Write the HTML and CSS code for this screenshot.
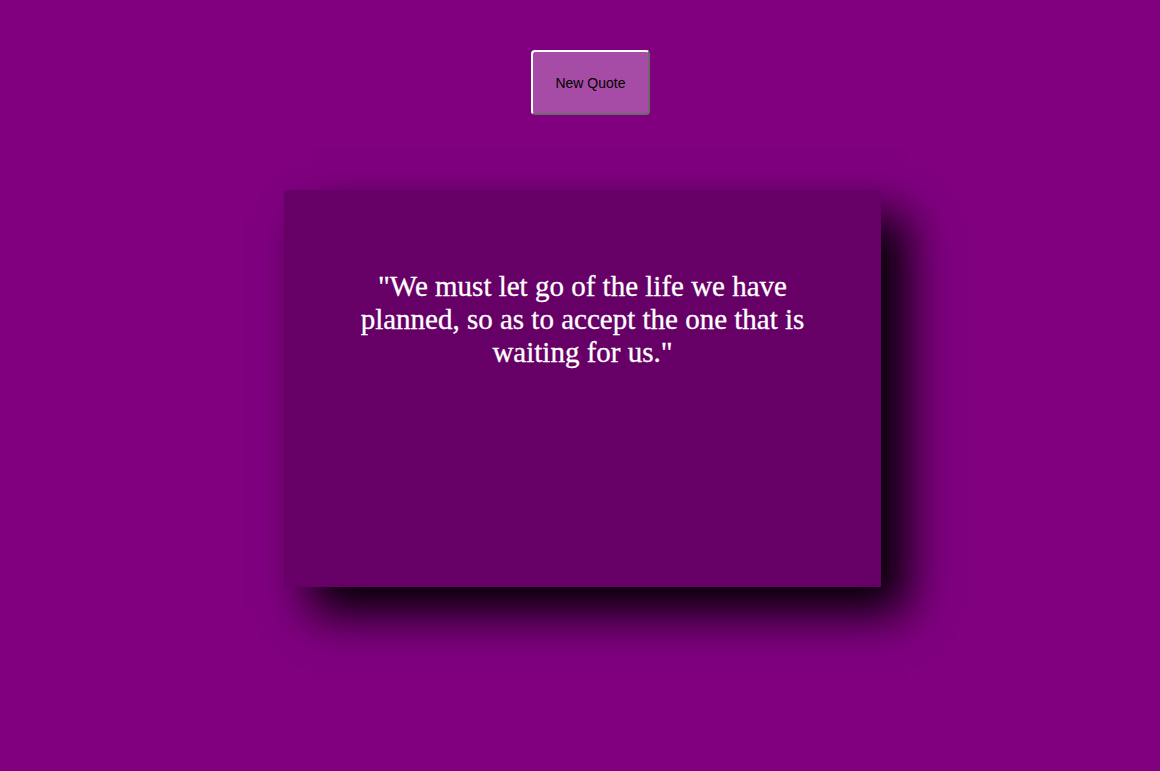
FILE: index.html
```html
<!DOCTYPE html>
<html>
<head>
<meta charset="utf-8">
<link rel="stylesheet" href="styles.css">
</head>
<body>
<main class="page">
  <button class="new-quote">New Quote</button>
  <section class="card">
    <p class="quote">"We must let go of the life we have planned, so as to accept the one that is waiting for us."</p>
  </section>
</main>
</body>
</html>
```
FILE: styles.css
```css
html, body {
  margin: 0;
  padding: 0;
  background: #800080;
  height: 100%;
}
.page {
  display: flex;
  flex-direction: column;
  align-items: center;
  padding: 50px 0 0 5px;
}
.new-quote {
  margin-left: 16px;
  width: 119px;
  height: 65px;
  background: #a64ca6;
  border: 2px solid;
  border-color: #ffffff #6a6a6a #6a6a6a #ffffff;
  border-radius: 4px;
  font-family: "Liberation Sans", Arial, sans-serif;
  font-size: 14px;
  color: #000;
  padding: 0;
}
.card {
  margin-top: 75px;
  width: 597px;
  height: 397px;
  box-sizing: border-box;
  background: #660066;
  box-shadow: 26px 26px 45px #000;
  padding: 80px 60px 0;
}
.quote {
  margin: 0;
  font-family: "Liberation Serif", "Times New Roman", serif;
  font-size: 29px;
  line-height: 33px;
  color: #fff;
  text-align: center;
  -webkit-text-stroke: 0.3px #fff;
}
```
